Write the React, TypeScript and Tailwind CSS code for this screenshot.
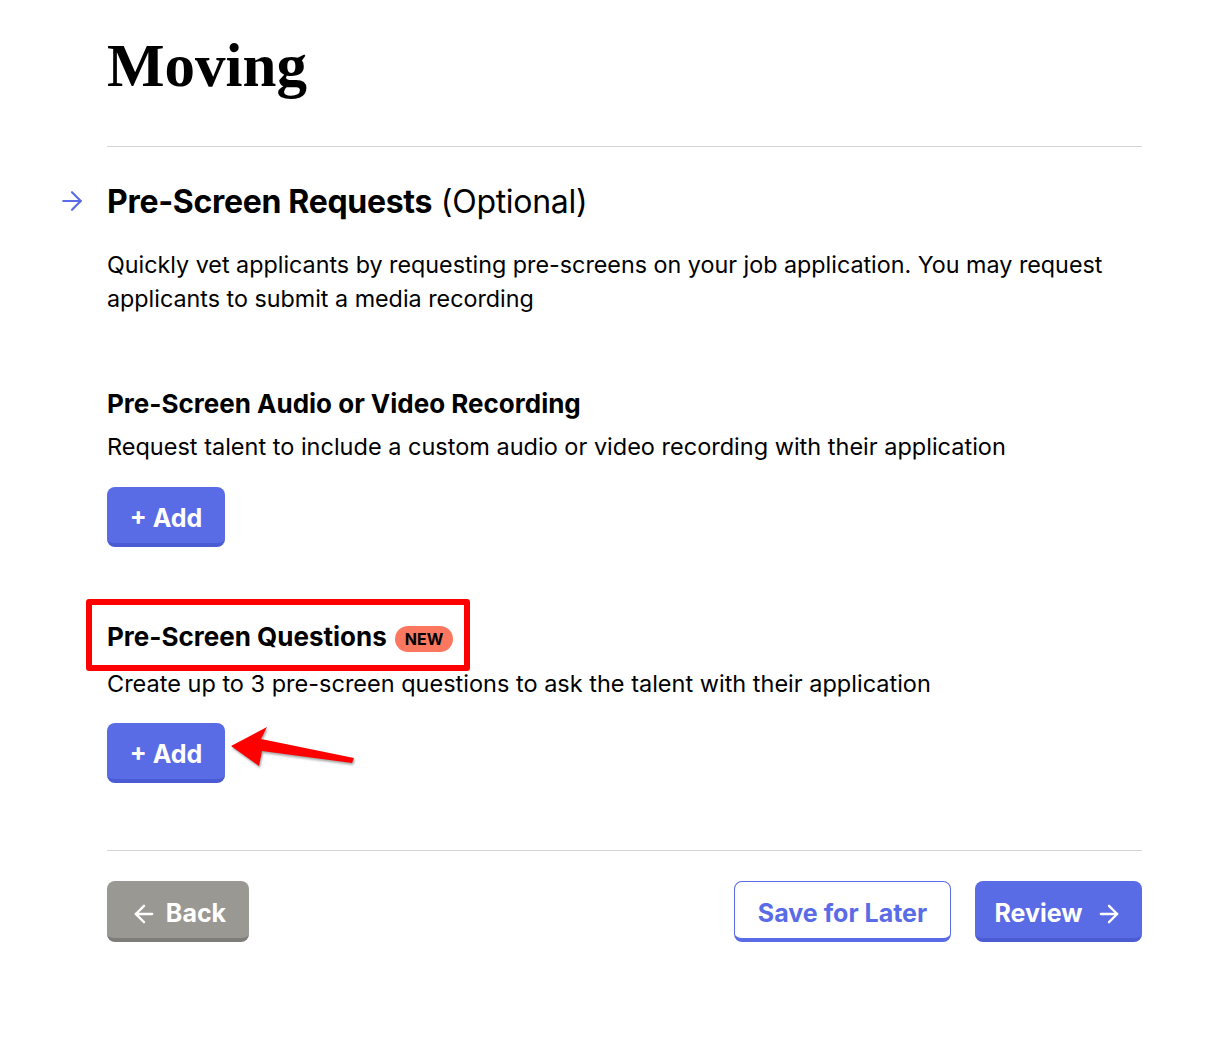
import { ArrowLeft, ArrowRight } from "lucide-react";

const sans = "font-['Inter','Noto_Sans',sans-serif]";

function AddButton() {
  return (
    <button className="flex h-[60px] w-[118px] items-center justify-center rounded-lg border-b-4 border-[#4a5bd3] bg-[#5a6be6] pt-2 text-[25px] font-bold text-white">
      + Add
    </button>
  );
}

export default function App() {
  return (
    <div className={`min-h-[1049px] bg-white text-black ${sans}`}>
      <div className="ml-[107px] w-[1035px] pt-[28px]">
        <h1 className="font-['Liberation_Serif',serif] text-[61px] font-bold leading-[76px]">Moving</h1>

        <hr className="mt-[42px] border-t border-[#d4d4d4]" />

        {/* Section header */}
        <div className="relative mt-[34px]">
          <ArrowRight className="absolute -left-[50px] top-[5px] h-[30px] w-[30px] text-[#5a6be6]" strokeWidth={1.7} />
          <h2 className="text-[32px] leading-[42px] tracking-[-0.3px]">
            <span className="font-bold">Pre-Screen Requests</span> (Optional)
          </h2>
        </div>

        <p className="mt-[25px] text-[23.3px] leading-[34px]">
          Quickly vet applicants by requesting pre-screens on your job application. You may request applicants to submit a media recording
        </p>

        {/* Audio / video */}
        <h3 className="mt-[71px] text-[26px] font-bold leading-[34px]">Pre-Screen Audio or Video Recording</h3>
        <p className="mt-[10px] text-[23.5px] leading-[32px]">
          Request talent to include a custom audio or video recording with their application
        </p>
        <div className="mt-[24px]">
          <AddButton />
        </div>

        {/* Questions */}
        <div className="relative mt-[73px]">
          <div className="pointer-events-none absolute -left-[21px] -top-[21px] h-[72px] w-[384px] rounded-[3px] border-[6px] border-[#ff0000]" />
          <h3 className="flex items-center gap-2 text-[26px] font-bold leading-[34px]">
            Pre-Screen Questions
            <span className="mt-[3px] rounded-full bg-[#fb7760] px-[10px] text-[16px] font-bold leading-[26px] text-black">NEW</span>
          </h3>
        </div>
        <p className="mt-[14px] text-[23.5px] leading-[32px]">
          Create up to 3 pre-screen questions to ask the talent with their application
        </p>
        <div className="relative mt-[23px] flex items-center">
          <AddButton />
          <svg className="absolute left-[122px] top-[2px] drop-shadow-[1px_2px_1px_rgba(0,0,0,0.35)]" width="132" height="50" viewBox="0 0 132 50">
            <polygon points="2,21 38,2 32,14 125,33 123,38 33,26 30,41" fill="#ff0000" />
          </svg>
        </div>

        <hr className="mt-[67px] border-t border-[#d4d4d4]" />

        {/* Footer actions */}
        <div className="mt-[30px] flex items-center justify-between">
          <button className="flex h-[61px] w-[142px] items-center justify-center gap-2 rounded-lg border-b-4 border-[#7f7d79] bg-[#9a9893] pt-2 text-[25px] font-bold text-white">
            <ArrowLeft className="h-[28px] w-[28px]" strokeWidth={2} />
            Back
          </button>
          <div className="flex items-center gap-[24px]">
            <button className="flex h-[61px] w-[217px] items-center justify-center rounded-lg border border-b-4 border-[#5a6be6] bg-white pt-2 text-[25px] font-bold text-[#5a6be6]">
              Save for Later
            </button>
            <button className="flex h-[61px] w-[167px] items-center justify-center gap-3 rounded-lg border-b-4 border-[#4a5bd3] bg-[#5a6be6] pt-2 text-[25px] font-bold text-white">
              Review
              <ArrowRight className="h-[28px] w-[28px]" strokeWidth={2} />
            </button>
          </div>
        </div>
      </div>
    </div>
  );
}
